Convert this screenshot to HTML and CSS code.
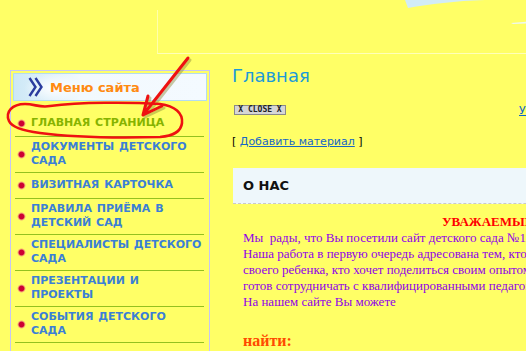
FILE: index.html
```html
<!DOCTYPE html>
<html>
<head>
    <meta charset="utf-8">
    <title>Главная</title>
    <link rel="stylesheet" href="styles.css">
</head>
<body>
    <div class="page">
        <div class="top">
            <div class="top-frame"></div>
            <svg class="wave" width="130" height="30" viewBox="0 0 130 30">
                <path d="M0 0 L3 8 C25 4 50 1 80 0 Z" fill="#d2ecf6"/>
                <path d="M106 23 L130 21 L130 23 L108 24 Z" fill="#eef8f0"/>
            </svg>
        </div>

        <div class="layout">
            <aside class="sidebar">
                <div class="menu-head">
                    <svg class="chevrons" width="15" height="20" viewBox="0 0 15 20">
                        <polyline points="1.5,1 7.5,10 1.5,19" fill="none" stroke="#2b3c9e" stroke-width="2.4"/>
                        <polyline points="7.5,1 13.5,10 7.5,19" fill="none" stroke="#2b3c9e" stroke-width="2.4"/>
                    </svg>
                    <span class="menu-title">Меню сайта</span>
                </div>
                <ul class="menu">
                    <li class="active"><a href="#">ГЛАВНАЯ СТРАНИЦА</a></li>
                    <li><a href="#">ДОКУМЕНТЫ ДЕТСКОГО САДА</a></li>
                    <li><a href="#">ВИЗИТНАЯ КАРТОЧКА</a></li>
                    <li><a href="#">ПРАВИЛА ПРИЁМА В ДЕТСКИЙ САД</a></li>
                    <li><a href="#">СПЕЦИАЛИСТЫ ДЕТСКОГО САДА</a></li>
                    <li><a href="#">ПРЕЗЕНТАЦИИ И ПРОЕКТЫ</a></li>
                    <li><a href="#">СОБЫТИЯ ДЕТСКОГО САДА</a></li>
                </ul>
            </aside>

            <main class="content">
                <h1>Главная</h1>

                <div class="tools">
                    <span class="close-btn">X CLOSE X</span>
                    <a class="ad-link" href="#">Убрать рекламу</a>
                </div>

                <div class="add">[ <a href="#">Добавить материал</a> ]</div>

                <div class="block-title">О НАС</div>

                <div class="text">
                    <div class="greeting">УВАЖАЕМЫЕ РОДИТЕЛИ!</div>
                    <div>Мы&nbsp; рады, что Вы посетили сайт детского сада №11 «Солнышко»!</div>
                    <div>Наша работа в первую очередь адресована тем, кто интересуется воспитанием</div>
                    <div>своего ребенка, кто хочет поделиться своим опытом и узнать новое,</div>
                    <div>готов сотрудничать с квалифицированными педагогами.</div>
                    <div>На нашем сайте Вы можете</div>
                    <div class="find">найти:</div>
                </div>
            </main>
        </div>

        <svg class="marks" width="526" height="351" viewBox="0 0 526 351">
            <g transform="translate(2,2)" stroke="#8c8a3a" stroke-opacity="0.45" fill="none" stroke-width="3" stroke-linecap="round" stroke-linejoin="round">
                <path d="M188 58 L143 115 M148 96 L143 115 L162 106"/>
            </g>
            <path d="M9 121 C5 112 12 104 25 104 C35 104 40 108 50 106 C80 102 130 102 160 104 C175 106 183 113 182 123 C181 132 172 136 160 137 C120 138 70 137 40 133 C25 131 12 128 9 121 Z"
                  fill="none" stroke="#ee1111" stroke-width="2.6"/>
            <path d="M188 58 L143 115 M148 96 L143 115 L162 106" fill="none" stroke="#ee1111" stroke-width="3" stroke-linecap="round" stroke-linejoin="round"/>
        </svg>
    </div>
</body>
</html>
```

FILE: styles.css
```css
body {
    margin: 0;
    background: #ffff66;
    overflow: hidden;
    font-family: "DejaVu Sans", Verdana, sans-serif;
}

.page {
    position: relative;
    width: 526px;
    height: 351px;
    overflow: hidden;
}

.top {
    position: relative;
    height: 65px;
    padding-top: 10px;
    box-sizing: border-box;
}

.top-frame {
    margin-left: 157px;
    height: 43px;
    border-left: 1px solid rgba(255, 255, 255, 0.45);
    border-bottom: 1px solid rgba(255, 255, 255, 0.55);
}

.wave {
    position: absolute;
    top: 0;
    left: 405px;
}

.layout {
    display: flex;
    align-items: flex-start;
    gap: 22px;
    padding-left: 10px;
}

.sidebar {
    flex: none;
    width: 200px;
    min-height: 300px;
    margin-top: 5px;
    padding: 2px 2px 0;
    box-sizing: border-box;
    border: 1px solid #c6c6f2;
    border-bottom: none;
}

.menu-head {
    display: flex;
    align-items: center;
    gap: 7px;
    height: 28px;
    padding-left: 14px;
    box-sizing: border-box;
    border: 1px solid #b3dcf0;
    background:
        radial-gradient(ellipse 30px 14px at 40px 14px, rgba(255, 255, 255, 0.95), rgba(255, 255, 255, 0) 100%),
        linear-gradient(to right, #cde8f6, #f2f9fe 35%, #f4faff);
}

.chevrons {
    display: block;
}

.menu-title {
    color: #ff8a12;
    font-weight: bold;
    font-size: 13px;
}

.menu {
    list-style: none;
    margin: 10px 3px 0 2px;
    padding: 0;
}

.menu li {
    display: flex;
    align-items: center;
    min-height: 18px;
    padding: 3px 1px 4px 2px;
    border-bottom: 1px solid #94c11f;
}

.menu li::before {
    content: "";
    flex: none;
    width: 9px;
    height: 9px;
    margin-right: 5px;
    border-radius: 50%;
    background: radial-gradient(circle, #cc0033 0, #cc0033 2.4px, rgba(235, 90, 130, 0.55) 3.4px, rgba(255, 255, 102, 0) 4.5px);
}

.menu a {
    color: #3b7fd6;
    font-weight: bold;
    font-size: 11px;
    line-height: 14px;
    word-spacing: 1px;
    text-decoration: none;
}

.menu li.active a {
    color: #86b300;
}

.content {
    flex: none;
    width: 700px;
}

h1 {
    margin: 0;
    color: #1c9ad8;
    font-size: 18px;
    font-weight: normal;
    line-height: 22px;
}

.tools {
    display: flex;
    align-items: center;
    height: 10px;
    margin-top: 18px;
}

.close-btn {
    margin-left: 2px;
    width: 52px;
    height: 10px;
    box-sizing: border-box;
    border: 1px solid #8a8a8a;
    background: #d6d6d6;
    color: #222;
    font-family: "DejaVu Sans Mono", monospace;
    font-size: 8px;
    font-weight: bold;
    line-height: 8px;
    text-align: center;
    white-space: nowrap;
}

.ad-link {
    margin-left: 233px;
    color: #0a64c8;
    font-size: 11px;
    white-space: nowrap;
}

.add {
    margin-top: 20px;
    font-size: 11px;
    line-height: 13px;
    color: #000;
}

.add a {
    color: #1767c6;
}

.block-title {
    margin: 20px 0 0 1px;
    padding: 11px 10px 10px;
    background: #eef7fb;
    border-bottom: 1px dashed #c9c9c9;
    color: #111;
    font-size: 13px;
    font-weight: bold;
    line-height: 14px;
}

.text {
    margin-top: 10px;
    padding-left: 11px;
    font-family: "Liberation Serif", "Times New Roman", serif;
    font-size: 13px;
    line-height: 16px;
    color: #9000e8;
    white-space: nowrap;
}

.greeting {
    padding-left: 199px;
    color: #ff0000;
    font-weight: bold;
}

.find {
    margin-top: 21px;
    color: #ff4a00;
    font-size: 16px;
    font-weight: bold;
    line-height: 20px;
}

.marks {
    position: absolute;
    top: 0;
    left: 0;
    pointer-events: none;
}
```
